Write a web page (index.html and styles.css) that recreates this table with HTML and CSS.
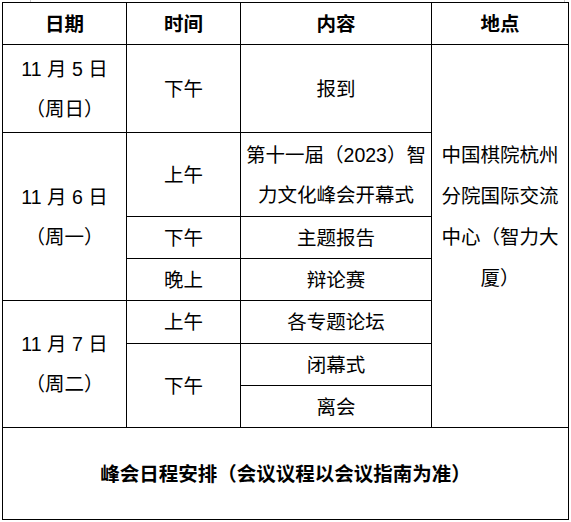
FILE: index.html
```html
<!DOCTYPE html>
<html lang="zh-CN">
<head>
<meta charset="utf-8">
<title>峰会日程安排</title>
<link rel="stylesheet" href="styles.css">
</head>
<body>
<div class="page">
  <div class="schedule">
    <div class="cell head">日期</div>
    <div class="cell head">时间</div>
    <div class="cell head">内容</div>
    <div class="cell head">地点</div>

    <div class="cell date">11 月 5 日<br>（周日）</div>
    <div class="cell">下午</div>
    <div class="cell">报到</div>
    <div class="cell place">中国棋院杭州<br>分院国际交流<br>中心（智力大<br>厦）</div>

    <div class="cell date span3">11 月 6 日<br>（周一）</div>
    <div class="cell">上午</div>
    <div class="cell multi">第十一届（2023）智<br>力文化峰会开幕式</div>
    <div class="cell">下午</div>
    <div class="cell">主题报告</div>
    <div class="cell">晚上</div>
    <div class="cell">辩论赛</div>

    <div class="cell date span3">11 月 7 日<br>（周二）</div>
    <div class="cell">上午</div>
    <div class="cell">各专题论坛</div>
    <div class="cell span2">下午</div>
    <div class="cell">闭幕式</div>
    <div class="cell">离会</div>

    <div class="cell foot">峰会日程安排（会议议程以会议指南为准）</div>
  </div>
</div>
</body>
</html>
```

FILE: styles.css
```css
html, body {
  margin: 0;
  padding: 0;
  background: #fff;
}

.page {
  position: relative;
  padding: 2px 0 0 2px;
}

.page::before,
.page::after {
  content: "";
  position: absolute;
  top: 0;
  width: 1px;
  height: 2px;
  background: #c8c8c8;
}

.page::before { left: 30px; }
.page::after { left: 564px; }

.schedule {
  display: grid;
  grid-template-columns: 123px 113px 190px 136px;
  grid-template-rows: 41px 87px 83px 41px 41px 42px 41px 41px 91px;
  gap: 1px;
  padding: 1px;
  background: #000;
  width: max-content;
  font-family: "Liberation Sans", "Noto Sans CJK SC", sans-serif;
  font-size: 19.5px;
  color: #000;
}

.cell {
  background: #fff;
  display: flex;
  align-items: center;
  justify-content: center;
  text-align: center;
  line-height: 40px;
}

.head {
  font-weight: bold;
}

.date {
  grid-column: 1;
}

.span3 {
  grid-row: span 3;
}

.span2 {
  grid-row: span 2;
}

.place {
  grid-column: 4;
  grid-row: 2 / 9;
  line-height: 41px;
  padding-bottom: 38px;
}

.foot {
  grid-column: 1 / -1;
  font-weight: bold;
}
```
